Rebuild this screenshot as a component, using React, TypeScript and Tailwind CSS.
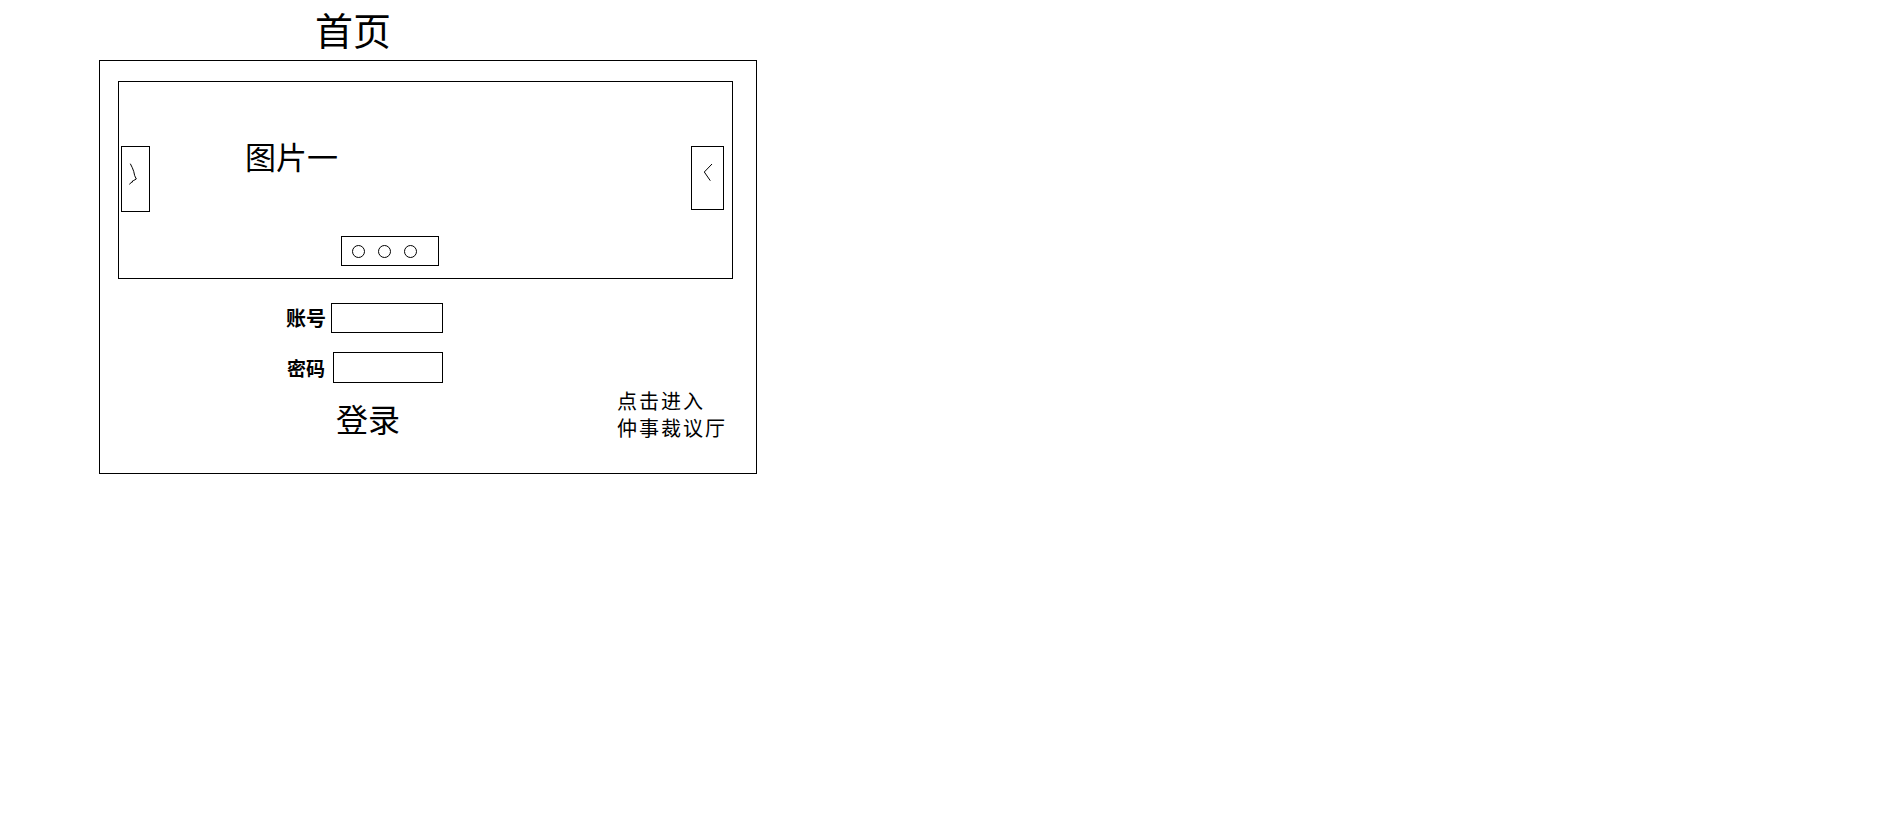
import React from "react";

const cjk = "font-['Noto_Sans_CJK_SC','Noto_Sans',sans-serif]";

function PrevArrow() {
  return (
    <div className="absolute left-[2px] top-[64px] w-[29px] h-[66px] border border-black">
      <svg width="27" height="64" viewBox="0 0 27 64" className="block">
        <polyline
          points="8.3,16.7 10.3,20.7 11.7,24.3 12.7,28.7 14.3,32 11.3,33.7 7.3,37.3"
          fill="none"
          stroke="black"
          strokeWidth="1"
        />
        <line x1="11" y1="33.5" x2="10" y2="35.5" stroke="black" strokeWidth="1" />
      </svg>
    </div>
  );
}

function NextArrow() {
  return (
    <div className="absolute right-[8px] top-[64px] w-[33px] h-[64px] border border-black">
      <svg width="31" height="62" viewBox="0 0 31 62" className="block">
        <polyline
          points="20,17 12.3,25 18.3,33.7"
          fill="none"
          stroke="black"
          strokeWidth="1"
        />
      </svg>
    </div>
  );
}

function Carousel() {
  return (
    <div className="relative ml-[18px] mt-[20px] w-[615px] h-[198px] border border-black">
      <div className="pl-[126px] pt-[58px] text-[31px] leading-none text-black">图片一</div>
      <PrevArrow />
      <NextArrow />
      {/* dots indicator */}
      <div className="absolute left-[222px] top-[154px] w-[98px] h-[30px] border border-black flex items-center pl-[10px] gap-[13px]">
        {[0, 1, 2].map((i) => (
          <span key={i} className="block w-[13px] h-[13px] rounded-full border border-black" />
        ))}
      </div>
    </div>
  );
}

function LoginForm() {
  return (
    <div className="w-[517px] flex flex-col">
      <div className="flex items-center mt-[24px]">
        <span className="ml-[186px] w-[40px] whitespace-nowrap text-[20px] font-bold leading-none">账号</span>
        <div className="ml-[5px] w-[112px] h-[30px] border border-black" />
      </div>
      <div className="flex items-center mt-[19px]">
        <span className="ml-[187px] w-[40px] whitespace-nowrap text-[19px] font-bold leading-none">密码</span>
        <div className="ml-[6px] w-[110px] h-[31px] border border-black" />
      </div>
      <div className="ml-[236px] mt-[19px] text-[32px] leading-none">登录</div>
    </div>
  );
}

export default function App() {
  return (
    <div className={`${cjk} bg-white text-black w-[1886px] h-[836px]`}>
      <div className="pl-[315px] pt-[10px] h-[60px] text-[38px] leading-[38px]">首页</div>
      <div className="ml-[99px] w-[658px] h-[414px] border border-black">
        <Carousel />
        <div className="flex">
          <LoginForm />
          <div className="mt-[108px] text-[20px] leading-[27px] tracking-[2px]">
            <div>点击进入</div>
            <div>仲事裁议厅</div>
          </div>
        </div>
      </div>
    </div>
  );
}
